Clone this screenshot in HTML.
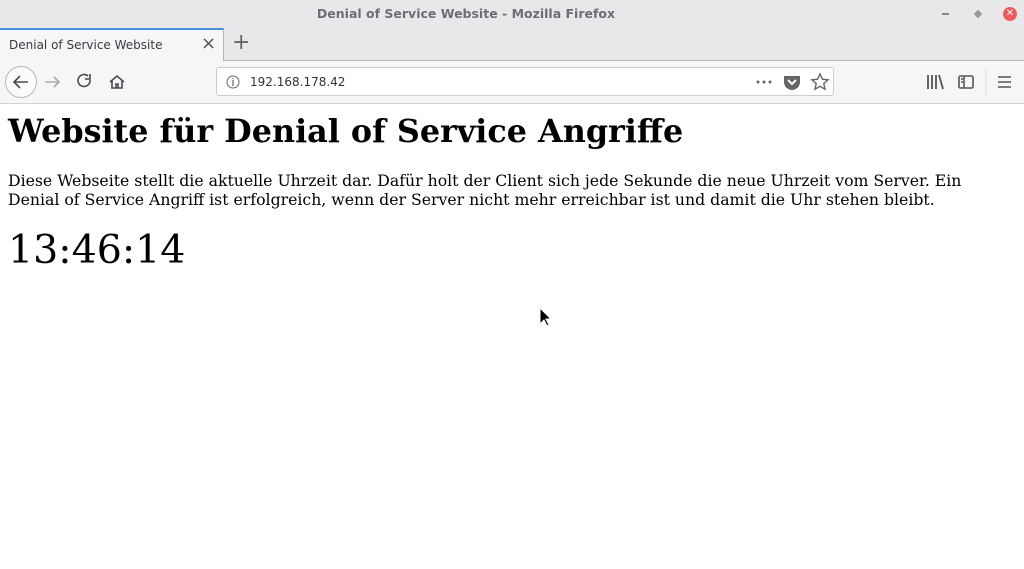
<!DOCTYPE html>
<html><head><meta charset="utf-8"><style>
body{margin:0;width:1024px;height:569px;overflow:hidden;background:#fff;font-family:"DejaVu Sans","Liberation Sans",sans-serif;position:relative}
.title{position:absolute;left:0;top:0;width:1024px;height:28px;background:#e8e8eb;}
.title .t{position:absolute;left:0;width:932px;top:6px;text-align:center;font-size:12.5px;color:#6b6e75;font-weight:bold}
.tabrow{position:absolute;left:0;top:28px;width:1024px;height:33px;background:#e8e8eb;border-bottom:1px solid #b6b7ba;box-sizing:border-box}
.tab{position:absolute;left:0;top:0;width:224px;height:33px;background:#f5f6f7;border-top:2px solid #4a90d9;border-right:1px solid #b6b7ba;box-sizing:border-box}
.tab .l{position:absolute;left:9px;top:8px;font-size:12px;color:#3a3a3f}
.tab .x{position:absolute;left:201px;top:3px;font-size:18px;color:#555}
.plus{position:absolute;left:232px;top:2px;font-size:22px;color:#666}
.tool{position:absolute;left:0;top:61px;width:1024px;height:43px;background:#f5f6f7;border-bottom:1px solid #d6d6d8;box-sizing:border-box}
.url{position:absolute;left:216px;top:6px;width:618px;height:29px;background:#fff;border:1px solid #ccc;border-radius:3px;box-sizing:border-box}
.url .a{position:absolute;left:33px;top:7px;font-size:12px;color:#333}
.content{position:absolute;left:8px;top:104px;font-family:"DejaVu Serif","Liberation Serif",serif;color:#000}
h1{margin:9px 0 0;font-size:31.8px;line-height:38px;font-weight:bold}
p{margin:20px 0 0;font-size:15.7px;line-height:19px;width:1000px}
.clk{margin-top:17px;font-size:39.5px;line-height:48px}
</style></head><body>
<div class="title"><div class="t">Denial of Service Website - Mozilla Firefox</div>
<div style="position:absolute;left:942px;top:13px;width:7px;height:2px;background:#888"></div>
<div style="position:absolute;left:975px;top:11px;width:6px;height:6px;background:#999;transform:rotate(45deg)"></div>
<div style="position:absolute;left:1003px;top:7px;width:14px;height:14px;border-radius:50%;background:#ed5b5b;color:#fff;font-size:10px;text-align:center;line-height:14px;font-weight:bold">✕</div>
</div>
<div class="tabrow"><div class="tab"><span class="l">Denial of Service Website</span><span class="x">×</span></div><span class="plus">+</span></div>
<div class="tool">
<div class="url"><span class="a">192.168.178.42</span></div>
<svg width="1024" height="43" style="position:absolute;left:0;top:0" fill="none" stroke="#4a4a4f" stroke-width="1.6">
<circle cx="21" cy="21" r="15.5" fill="#fbfbfb" stroke="#b8b8bb" stroke-width="1"/>
<path d="M28 21H14M20 15l-6 6 6 6"/>
<path d="M45 21h14M54 16l5 5-5 5" stroke="#aaa"/>
<path d="M90 19a6 6 0 1 1-2-4M90 13v5h-5"/>
<path d="M110 21l7-6 7 6M112 19v8h10v-8M116 27v-4h2v4"/>
<circle cx="233" cy="21" r="6" stroke="#666" stroke-width="1"/><path d="M233 19v6M233 17v1" stroke="#666" stroke-width="1.2"/>
<circle cx="758" cy="21" r="1.5" fill="#666" stroke="none"/><circle cx="764" cy="21" r="1.5" fill="#666" stroke="none"/><circle cx="770" cy="21" r="1.5" fill="#666" stroke="none"/>
<path d="M784 15h16v6a8 8 0 0 1-16 0z" fill="#666" stroke="none"/><path d="M788 19l4 4 4-4" stroke="#fff" stroke-width="2"/>
<path d="M820 13l2.4 5.2 5.6.6-4.2 3.8 1.2 5.6-5-2.9-5 2.9 1.2-5.6-4.2-3.8 5.6-.6z" stroke="#666" stroke-width="1.4"/>
<path d="M928 14v14M932 14v14M936 14v14M939 14l4 14" stroke="#555" stroke-width="1.8"/>
<rect x="959" y="15" width="14" height="12" rx="1.5" stroke="#555"/><path d="M964 15v12M961 18h2M961 21h2" stroke="#555"/>
<path d="M986 8v27" stroke="#ddd" stroke-width="1"/>
<path d="M998 16h13M998 21h13M998 26h13" stroke="#555"/>
</svg>
</div>
<div class="content">
<h1>Website für Denial of Service Angriffe</h1>
<p>Diese Webseite stellt die aktuelle Uhrzeit dar. Dafür holt der Client sich jede Sekunde die neue Uhrzeit vom Server. Ein Denial of Service Angriff ist erfolgreich, wenn der Server nicht mehr erreichbar ist und damit die Uhr stehen bleibt.</p>
<div class="clk">13:46:14</div>
</div>
<svg style="position:absolute;left:539px;top:307px" width="14" height="22"><path d="M1 1v16l4-4 3 6 2-1-3-6h5z" fill="#000" stroke="#fff" stroke-width="1"/></svg>
</body></html>
